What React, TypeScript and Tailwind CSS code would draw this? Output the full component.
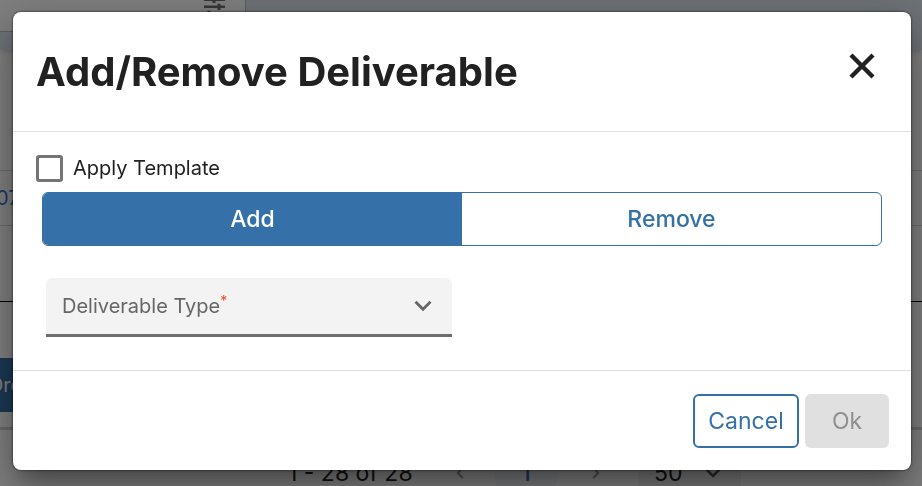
import { useState } from "react";

function CloseIcon() {
  return (
    <svg className="w-7 h-7" viewBox="0 0 28 28" fill="none" stroke="#212121" strokeWidth="4.4">
      <path d="M3 3 L25 25 M25 3 L3 25" />
    </svg>
  );
}

function ChevronIcon({ className = "" }: { className?: string }) {
  return (
    <svg className={className} viewBox="0 0 18 12" fill="none" stroke="currentColor" strokeWidth="2.8">
      <path d="M1.5 1.8 L9 9.3 L16.5 1.8" />
    </svg>
  );
}

function TuneIcon() {
  return (
    <svg className="w-[21px] h-7" viewBox="0 0 21 28" fill="none" stroke="#6e6e6e" strokeWidth="2.5">
      <path d="M0 8.8 H21 M0 15.8 H21 M0 22.8 H21" />
      <path d="M10 5.5 V12 M15 12.7 V18.9 M5 19.7 V25.9" strokeWidth="3" />
    </svg>
  );
}

function Backdrop() {
  return (
    <div className="h-screen overflow-hidden bg-white" aria-hidden="true">
      <div className="flex h-[50px] bg-[#dde6ee] shadow-md">
        <div className="w-[246px] h-8 flex justify-end items-end pr-5 border-r border-b border-[#bbbbbb] bg-white">
          <div className="h-10">
            <TuneIcon />
          </div>
        </div>
      </div>
      <div className="h-[120px]" />
      <div className="h-14 flex items-center border-y border-[#d4d4d4]">
        <a href="#record" className="-ml-1 text-xl text-[#3a75d0]">07</a>
      </div>
      <div className="h-[76px] border-b border-black" />
      <div className="h-14" />
      <div className="h-[54px] flex">
        <button className="-ml-3 w-32 text-left text-xl text-white bg-[#3570a8]">Order</button>
      </div>
      <div className="h-[18px] border-b-[3px] border-[#d4d4d4]" />
      <div className="flex items-center h-[86px] pl-[288px] text-[23px] text-[#212121]">
        <span className="w-[166px]">1 - 28 of 28</span>
        <ChevronIcon className="w-3 h-2 rotate-90 text-[#999999]" />
        <span className="ml-7 w-16 h-16 rounded-full bg-[#f2f7fa] text-[#3570a8] font-medium flex items-center justify-center">1</span>
        <ChevronIcon className="ml-8 w-3 h-2 -rotate-90 text-[#999999]" />
        <span className="ml-9 w-[103px] h-14 pl-4 pr-5 flex items-center justify-between bg-[#f2f2f2]">
          50
          <ChevronIcon className="w-4 h-3 text-[#555555]" />
        </span>
      </div>
    </div>
  );
}

export default function App() {
  const [mode, setMode] = useState("add");

  return (
    <div className="font-['Inter','Noto_Sans',sans-serif]">
      <Backdrop />
      <div className="fixed inset-0 bg-black/50 pt-3 pl-[13px] pr-[11px]">
        <div
          role="dialog"
          aria-labelledby="dialog-title"
          className="bg-white rounded-lg text-[#212121] shadow-[0_0_2px_1px_rgba(0,0,0,0.35),0_16px_22px_-10px_rgba(0,0,0,0.3),0_24px_38px_3px_rgba(0,0,0,0.16),0_9px_46px_8px_rgba(0,0,0,0.16)]"
        >
          <header className="flex justify-between items-start h-[120px] pt-9 pl-[23px] pr-[35px] border-b border-[#e0e0e0]">
            <h1 id="dialog-title" className="text-[40px] leading-12 font-bold">
              Add/Remove Deliverable
            </h1>
            <button aria-label="Close" className="mt-1">
              <CloseIcon />
            </button>
          </header>

          <div className="pt-[22px] pl-[23px] pr-[29px] pb-[33px]">
            <label className="flex items-center gap-[10px] text-xl leading-[28px]">
              <input
                type="checkbox"
                className="appearance-none w-[27px] h-[27px] border-[3px] border-[#757575] rounded-[3px] checked:bg-[#3570a8]"
              />
              Apply Template
            </label>

            <div className="flex mt-[10px] ml-[6px] h-[54px] rounded-md border border-[#3570a8] overflow-hidden text-[23px] font-medium">
              <button
                onClick={() => setMode("add")}
                className={mode === "add" ? "flex-1 bg-[#3570a8] text-white" : "flex-1 text-[#3570a8]"}
              >
                Add
              </button>
              <button
                onClick={() => setMode("remove")}
                className={mode === "remove" ? "flex-1 bg-[#3570a8] text-white" : "flex-1 text-[#3570a8]"}
              >
                Remove
              </button>
            </div>

            <button
              role="combobox"
              aria-expanded="false"
              className="flex items-center justify-between mt-8 ml-[10px] w-[406px] h-[59px] pl-4 pr-5 bg-[#f3f3f3] border-b-[3px] border-[#6e6e6e] rounded-t-md text-xl text-[#666666]"
            >
              <span>
                Deliverable Type<sup className="text-sm text-[#f44336]">*</sup>
              </span>
              <ChevronIcon className="w-[18px] h-3" />
            </button>
          </div>

          <footer className="flex justify-end gap-[6px] pt-[23px] pb-[22px] pr-[22px] border-t border-[#e0e0e0] text-[23px]">
            <button className="w-[106px] h-[54px] border-2 border-[#3570a8] rounded-md text-[#3570a8]">
              Cancel
            </button>
            <button disabled className="w-[84px] h-[54px] rounded-md bg-[#e0e0e0] text-[#8f8f8f]">
              Ok
            </button>
          </footer>
        </div>
      </div>
    </div>
  );
}
